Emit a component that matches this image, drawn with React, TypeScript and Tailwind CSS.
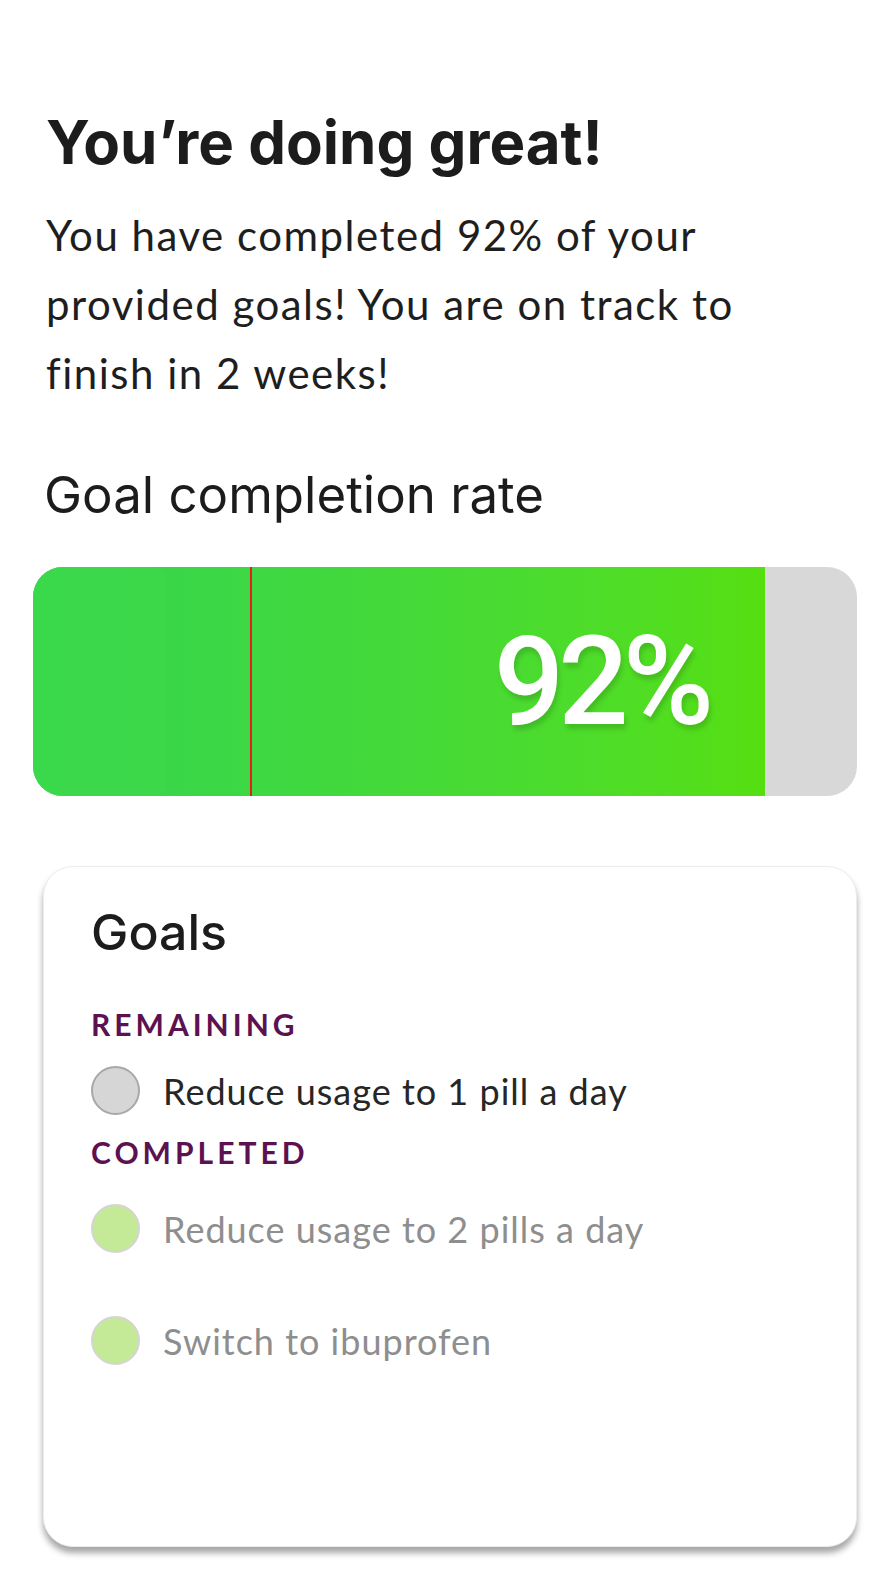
import React from "react";

const body = { fontFamily: '"Lato", "Open Sans", sans-serif' };

function Dot({ done }: { done: boolean }) {
  return (
    <span
      className={
        done
          ? "block w-[49px] h-[49px] rounded-full bg-[#c4ea97] border-2 border-[#d4d4d4] shrink-0"
          : "block w-[49px] h-[49px] rounded-full bg-[#d6d6d6] border-2 border-[#a8a8a8] shrink-0"
      }
    />
  );
}

export default function App() {
  return (
    <div className="w-full h-[1586px] overflow-hidden bg-white pt-[107px]" style={{ fontFamily: '"Inter", sans-serif' }}>
      <h1 className="ml-[46px] text-[60px] leading-[70px] font-bold text-[#1c1c1c]">
        You’re doing great!
      </h1>
      <p className="ml-[46px] mt-[24px] w-[720px] text-[42px] leading-[69px] tracking-[1.5px] text-[#1e1e1e]" style={body}>
        You have completed 92% of your provided goals! You are on track to finish in 2 weeks!
      </p>
      <h2 className="ml-[44px] mt-[57px] text-[51px] leading-[60px] font-normal text-[#1c1c1c]">
        Goal completion rate
      </h2>
      <div className="ml-[33px] mt-[42px] w-[824px] h-[229px] rounded-[30px] bg-[#d8d8d8] overflow-hidden flex">
        <div className="relative w-[732px] h-full bg-gradient-to-r from-[#30d44f] to-[#55df0f] flex items-center justify-end pr-[57px]">
          <div className="absolute left-0 top-0 bottom-0 w-[134px] bg-[#3dd84b] rounded-r-[12px] opacity-80" />
          <div className="absolute left-[217px] top-0 bottom-0 w-[2px] bg-[#e0201a]" />
          <span
            className="relative text-white text-[124px] leading-none font-medium tracking-[-6px] [text-shadow:2px_5px_5px_rgba(0,0,0,0.15)]"
            style={{ fontFamily: '"Roboto", sans-serif' }}
          >
            92%
          </span>
        </div>
      </div>
      <div className="ml-[43px] mt-[70px] w-[814px] h-[681px] rounded-[30px] bg-white border border-[#ececec] shadow-[0_6px_6px_rgba(0,0,0,0.35)] px-[47px] pt-[38px]">
        <h3 className="text-[50px] leading-[54px] font-medium text-[#1c1c1c]">Goals</h3>
        <div className="mt-[50px] text-[30px] leading-[30px] tracking-[4px] font-bold text-[#5c1150]" style={body}>REMAINING</div>
        <div className="mt-[27px] flex items-center gap-[23px]">
          <Dot done={false} />
          <span className="text-[36px] leading-[48px] tracking-[1px] text-[#262626]" style={body}>Reduce usage to 1 pill a day</span>
        </div>
        <div className="mt-[22px] text-[30px] leading-[30px] tracking-[4px] font-bold text-[#5c1150]" style={body}>COMPLETED</div>
        <div className="mt-[37px] flex flex-col gap-[63px]">
          <div className="flex items-center gap-[23px]">
            <Dot done />
            <span className="text-[36px] leading-[48px] tracking-[1px] text-[#8e8e8e]" style={body}>Reduce usage to 2 pills a day</span>
          </div>
          <div className="flex items-center gap-[23px]">
            <Dot done />
            <span className="text-[36px] leading-[48px] tracking-[1px] text-[#8e8e8e]" style={body}>Switch to ibuprofen</span>
          </div>
        </div>
      </div>
    </div>
  );
}
